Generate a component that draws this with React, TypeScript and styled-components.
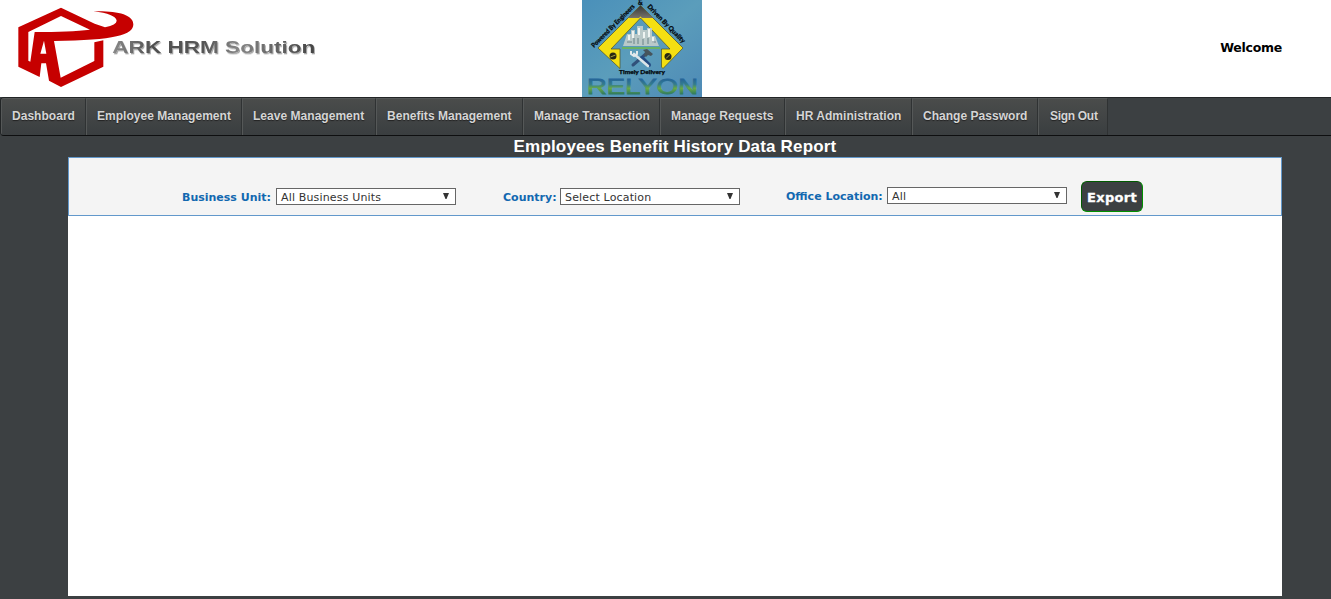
import React from "react";
import styled, { createGlobalStyle } from "styled-components";

const GlobalStyle = createGlobalStyle`
  * { box-sizing: border-box; }
  body { margin: 0; background: #3c4042; font-family: "DejaVu Sans", Verdana, sans-serif; overflow: hidden; }
`;

const Header = styled.header`
  height: 97px;
  background: #fff;
  display: grid;
  grid-template-columns: 582px 120px 1fr;
  align-items: center;
`;
const Welcome = styled.div`
  justify-self: end;
  margin: 0 49px 2px 0;
  font-size: 12.5px;
  line-height: 16px;
  font-weight: bold;
  letter-spacing: -0.25px;
  color: #000;
`;
const Drawing = styled.svg`
  display: block;
`;

const Nav = styled.nav`
  display: flex;
  height: 39px;
  border: 1px solid #222526;
  border-right: 0;
  border-bottom-color: #0e0f10;
  border-radius: 4px 0 0 4px;
  overflow: hidden;
`;
const NavItem = styled.a<{ $width: number }>`
  width: ${(p) => p.$width}px;
  flex: none;
  padding-left: 10px;
  border-left: 1px solid #555858;
  border-right: 1px solid #2f3233;
  border-top: 1px solid #555858;
  background: linear-gradient(#4a4c4b, #3a3e40);
  color: #d5d5d5;
  font: bold 12px/35px "Liberation Sans", Arial, sans-serif;
  letter-spacing: 0.03px;
  text-shadow: 0 1px 1px #222;
  white-space: nowrap;
  &:last-child { padding-left: 11px; letter-spacing: -0.3px; }
`;

const Content = styled.main`
  width: 1214px;
  margin-left: 68px;
`;
const Title = styled.h1`
  margin: 0;
  height: 21px;
  font: bold 17px/21px "Liberation Sans", Arial, sans-serif;
  letter-spacing: 0.17px;
  color: #fff;
  text-align: center;
`;
const Filters = styled.section`
  display: flex;
  align-items: flex-start;
  height: 59px;
  padding: 23px 0 0 113px;
  border: 1px solid #6298cb;
  background: #f4f4f4;
`;
const Field = styled.label<{ $width: number; $top: number }>`
  display: flex;
  justify-content: space-between;
  width: ${(p) => p.$width}px;
  margin-top: ${(p) => p.$top}px;
  font-size: 11px;
  line-height: 19px;
  font-weight: bold;
  color: #1268b0;
  white-space: nowrap;
`;
const SelectBox = styled.span`
  display: flex;
  justify-content: space-between;
  width: 180px;
  height: 17px;
  padding: 0 5px 0 4px;
  border: 1px solid #666;
  background: #fff;
  color: #333;
  font-weight: normal;
  letter-spacing: 0.16px;
  line-height: 17px;
`;
const Arrow = styled.svg`
  margin-top: 4px;
`;
const Gap = styled.span<{ $width: number }>`
  width: ${(p) => p.$width}px;
`;
const ExportButton = styled.button`
  width: 62px;
  height: 31px;
  padding: 2px 0 0;
  border: 1px solid;
  border-color: #005a00 #009000 #009000 #005a00;
  border-radius: 6px;
  background: #3c4042;
  color: #fff;
  font: bold 13px/16px "DejaVu Sans", Verdana, sans-serif;
  letter-spacing: 0.3px;
  -webkit-text-stroke: 0.3px #fff;
`;
const Sheet = styled.div`
  height: 380px;
  background: #fff;
`;

const navItems: [string, number][] = [
  ["Dashboard", 85],
  ["Employee Management", 156],
  ["Leave Management", 134],
  ["Benefits Management", 147],
  ["Manage Transaction", 137],
  ["Manage Requests", 125],
  ["HR Administration", 127],
  ["Change Password", 126],
  ["Sign Out", 70],
];

function ArkLogo() {
  return (
    <Drawing width="330" height="97" viewBox="0 0 990 291">
      <defs>
        <linearGradient id="arkText" x1="336" x2="945" y1="0" y2="0" gradientUnits="userSpaceOnUse">
          <stop offset="0" stopColor="#8a8a8a" />
          <stop offset=".2" stopColor="#505050" />
          <stop offset=".45" stopColor="#555" />
          <stop offset=".62" stopColor="#858585" />
          <stop offset="1" stopColor="#444" />
        </linearGradient>
        <filter id="arkSoft" x="-5%" y="-20%" width="110%" height="150%">
          <feGaussianBlur stdDeviation="1.4" result="soft" />
          <feDropShadow in="soft" dx="3" dy="4" stdDeviation="2" floodOpacity=".35" />
        </filter>
      </defs>
      <path
        fill="#c60000"
        fillRule="evenodd"
        d="M55 82 183 23 284 71 315 82Q350 74 350 62 347 42 280 34C350 32 400 43 400 73 400 105 345 121 162 123L182 233 283 183V127L310 121V200L183 261 147 242 138 190H124L119 231 55 200ZM85 96V182L91 185 104 96Q210 96 270 89L183 48ZM132 122 121 161H139Z"
      />
      <text
        x="337" y="158" textLength="609" lengthAdjust="spacingAndGlyphs"
        fontFamily="Liberation Sans, Arial, sans-serif" fontSize="47" fontWeight="bold"
        fill="url(#arkText)" filter="url(#arkSoft)"
      >ARK HRM Solution</text>
    </Drawing>
  );
}

function RelyonLogo() {
  return (
    <Drawing width="120" height="97" viewBox="0 0 120 97">
      <defs>
        <linearGradient id="sky" x1="0" y1="0" x2="1" y2="1">
          <stop offset="0" stopColor="#4a90ba" />
          <stop offset=".5" stopColor="#5b9dbb" />
          <stop offset="1" stopColor="#4e8ab6" />
        </linearGradient>
        <linearGradient id="brand" x1="0" y1="78" x2="0" y2="94" gradientUnits="userSpaceOnUse">
          <stop offset="0" stopColor="#22609a" />
          <stop offset=".4" stopColor="#347c8c" />
          <stop offset=".65" stopColor="#69aa42" />
          <stop offset="1" stopColor="#2f7a60" />
        </linearGradient>
        <linearGradient id="cap" x1="0" y1="0" x2="0" y2="1">
          <stop offset="0" stopColor="#333536" />
          <stop offset="1" stopColor="#77736a" />
        </linearGradient>
        <path id="leftSide" d="M12 48 55 5" />
        <path id="rightSide" d="M65 7 102 45" />
      </defs>
      <rect width="120" height="97" fill="url(#sky)" />
      <path fill="#f4df12" stroke="#4f5222" strokeWidth=".7" fillRule="evenodd" d="M58.5 5.5 101 48 81 68.500 79.500 67V49H88L58.500 18 29 49H38V68.500L16 48Z" />
      <path fill="url(#cap)" d="M58.500 5.500 71 18H60L58.500 16.500 57 18H46Z" />
      <path fill="#b9c9c9" d="M41 46 45 34H49V30H53V34H55V26H61V30H65V28H70V36H73L77 46Z" />
      <path fill="none" stroke="#eef4f2" strokeWidth="2" d="M47 35v5M51 31v7M57 28v7M62 32v6M67 29v8M71 37v6" />
      <path fill="none" stroke="#6b8388" d="M45 42h5M52 38v6M56 38v6M61 39v6M66 38v6M70 42h4" />
      <path stroke="#69b265" strokeWidth="2" d="M40 48H78" />
      <path stroke="#31517a" strokeWidth="3" strokeLinecap="round" d="m65 53-14 12" />
      <path stroke="#244c83" strokeWidth="4" strokeLinecap="round" d="m60 58 7 7" />
      <path stroke="#dbe5e9" strokeWidth="2.600" strokeLinecap="round" d="m52 54 14 12" />
      <path fill="none" stroke="#e2eaec" strokeWidth="2" d="M49 51v3l3 2 3-2v-3" />
      <path fill="#46545c" d="m61 50 4-1 6 5-2 2-3-1-2 2-2-2 1-3Z" />
      <circle cx="31" cy="56" r="3.500" fill="#282814" />
      <circle cx="86" cy="56.500" r="3.500" fill="#282814" />
      <path stroke="#aaa43b" d="m28.500 57 5-2M84 58.500l4-4" />
      <g fill="#03090d" stroke="#03090d" strokeWidth=".25" fontFamily="Lato, sans-serif" fontWeight="900" fontSize="6.500">
        <text><textPath href="#leftSide" textLength="58" lengthAdjust="spacingAndGlyphs">Powered By Engineers</textPath></text>
        <text x="56" y="4.500">&amp;</text>
        <text><textPath href="#rightSide" textLength="51" lengthAdjust="spacingAndGlyphs">Driven By Quality</textPath></text>
        <text x="37" y="74" fontSize="6" textLength="46" lengthAdjust="spacingAndGlyphs">Timely Delivery</text>
      </g>
      <text x="5" y="93.500" textLength="111" lengthAdjust="spacingAndGlyphs" fontFamily="Liberation Sans, sans-serif" fontSize="21.500" fill="url(#brand)" stroke="url(#brand)" strokeWidth=".8">RELYON</text>
    </Drawing>
  );
}

function Select({ label, value, width, top }: { label: string; value: string; width: number; top: number }) {
  return (
    <Field $width={width} $top={top}>
      {label}
      <SelectBox>
        {value}
        <Arrow width="8" height="7" viewBox="0 0 8 7"><path fill="#333" d="M1 0H7L4.500 6H3.500Z" /></Arrow>
      </SelectBox>
    </Field>
  );
}

export default function App() {
  return (
    <>
      <GlobalStyle />
      <Header>
        <ArkLogo />
        <RelyonLogo />
        <Welcome>Welcome</Welcome>
      </Header>
      <Nav>
        {navItems.map(([name, width]) => <NavItem key={name} $width={width}>{name}</NavItem>)}
      </Nav>
      <Content>
        <Title>Employees Benefit History Data Report</Title>
        <Filters>
          <Select label="Business Unit:" value="All Business Units" width={274} top={7} />
          <Gap $width={47} />
          <Select label="Country:" value="Select Location" width={237} top={7} />
          <Gap $width={46} />
          <Select label="Office Location:" value="All" width={281} top={6} />
          <Gap $width={14} />
          <ExportButton>Export</ExportButton>
        </Filters>
        <Sheet />
      </Content>
    </>
  );
}
